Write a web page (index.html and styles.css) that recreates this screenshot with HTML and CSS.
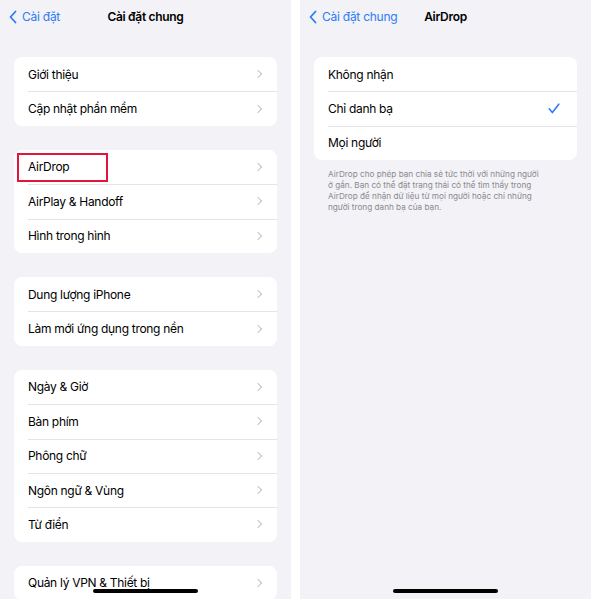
FILE: index.html
```html
<!DOCTYPE html>
<html lang="vi">
<head>
  <meta charset="UTF-8">
  <meta name="viewport" content="width=device-width, initial-scale=1" />
  <title>Cài đặt AirDrop</title>
  <link rel="stylesheet" href="styles.css">
</head>
<body>
  <div class="screens">
    <!-- Left screen: General settings -->
    <section class="screen">
      <header class="navbar">
        <span class="back">
          <svg class="back-icon" viewBox="0 0 8 14" width="8" height="14"><path d="M6.5 1.5 1.5 7l5 5.5" fill="none" stroke="currentColor" stroke-width="1.8" stroke-linecap="round" stroke-linejoin="round"/></svg>
          Cài đặt
        </span>
        <h1 class="title">Cài đặt chung</h1>
      </header>

      <ul class="group">
        <li class="row"><span>Giới thiệu</span><i class="chev"></i></li>
        <li class="row"><span>Cập nhật phần mềm</span><i class="chev"></i></li>
      </ul>
      <ul class="group">
        <li class="row"><span class="highlight">AirDrop</span><i class="chev"></i></li>
        <li class="row"><span>AirPlay &amp; Handoff</span><i class="chev"></i></li>
        <li class="row"><span>Hình trong hình</span><i class="chev"></i></li>
      </ul>
      <ul class="group">
        <li class="row"><span>Dung lượng iPhone</span><i class="chev"></i></li>
        <li class="row"><span>Làm mới ứng dụng trong nền</span><i class="chev"></i></li>
      </ul>
      <ul class="group">
        <li class="row"><span>Ngày &amp; Giờ</span><i class="chev"></i></li>
        <li class="row"><span>Bàn phím</span><i class="chev"></i></li>
        <li class="row"><span>Phông chữ</span><i class="chev"></i></li>
        <li class="row"><span>Ngôn ngữ &amp; Vùng</span><i class="chev"></i></li>
        <li class="row"><span>Từ điển</span><i class="chev"></i></li>
      </ul>
      <ul class="group">
        <li class="row"><span>Quản lý VPN &amp; Thiết bị</span><i class="chev"></i></li>
      </ul>

      <div class="home-bar"></div>
    </section>

    <!-- Right screen: AirDrop -->
    <section class="screen">
      <header class="navbar">
        <span class="back">
          <svg class="back-icon" viewBox="0 0 8 14" width="8" height="14"><path d="M6.5 1.5 1.5 7l5 5.5" fill="none" stroke="currentColor" stroke-width="1.8" stroke-linecap="round" stroke-linejoin="round"/></svg>
          Cài đặt chung
        </span>
        <h1 class="title">AirDrop</h1>
      </header>

      <ul class="group">
        <li class="row"><span>Không nhận</span></li>
        <li class="row"><span>Chỉ danh bạ</span>
          <svg class="check" viewBox="0 0 12 11" width="12" height="11"><path d="M1.2 5.8 4.4 9.6 10.8 1.2" fill="none" stroke="currentColor" stroke-width="1.6" stroke-linecap="round" stroke-linejoin="round"/></svg>
        </li>
        <li class="row"><span>Mọi người</span></li>
      </ul>
      <p class="note">AirDrop cho phép bạn chia sẻ tức thời với những người<br>ở gần. Bạn có thể đặt trạng thái có thể tìm thấy trong<br>AirDrop để nhận dữ liệu từ mọi người hoặc chỉ những<br>người trong danh bạ của bạn.</p>

      <div class="home-bar"></div>
    </section>
  </div>
</body>
</html>
```

FILE: styles.css
```css
body {
  margin: 0;
  background: #fff;
  font-family: Inter, "Noto Sans", sans-serif;
  color: #000;
}
.screens {
  display: flex;
  gap: 9px;
  height: 599px;
}
.screen {
  position: relative;
  width: 291px;
  height: 599px;
  overflow: hidden;
  background: #f2f2f7;
  padding: 0 14px;
  box-sizing: border-box;
}
.navbar {
  position: relative;
  height: 33px;
  display: flex;
  align-items: center;
  justify-content: center;
  margin: 0 -14px 24px;
}
.back {
  position: absolute;
  left: 9px;
  top: 9px;
  display: flex;
  align-items: center;
  gap: 5px;
  color: #2c7cf6;
  font-size: 12px;
  letter-spacing: -0.25px;
  line-height: 15px;
}
.back-icon {
  display: block;
}
.title {
  margin: 0;
  font-size: 12px;
  font-weight: 600;
  letter-spacing: -0.3px;
  line-height: 15px;
}
.group {
  list-style: none;
  margin: 0 0 24px;
  padding: 0;
  background: #fff;
  border-radius: 8px;
}
.row {
  position: relative;
  height: 34.4px;
  display: flex;
  align-items: center;
  justify-content: space-between;
  padding: 0 16px 0 14px;
  font-size: 12px;
  letter-spacing: -0.3px;
}
.row + .row::before {
  content: "";
  position: absolute;
  left: 14px;
  right: 0;
  top: 0;
  border-top: 1px solid #e4e4e8;
}
.chev {
  width: 5px;
  height: 5px;
  border-right: 1.2px solid #c4c4c8;
  border-top: 1.2px solid #c4c4c8;
  transform: rotate(45deg);
}
.check {
  color: #2c7cf6;
  margin-right: 1px;
}
.highlight {
  position: relative;
}
.highlight::after {
  content: "";
  position: absolute;
  left: -11px;
  top: -6px;
  width: 91px;
  height: 29px;
  border: 2px solid #e0163c;
  box-sizing: border-box;
}
.note {
  margin: -15px 0 0;
  padding: 0 4px 0 14px;
  font-size: 8.2px;
  line-height: 11px;
  color: #8a8a8e;
}
.home-bar {
  position: absolute;
  left: 93px;
  bottom: 6px;
  width: 105px;
  height: 4px;
  border-radius: 2px;
  background: #000;
}
```
